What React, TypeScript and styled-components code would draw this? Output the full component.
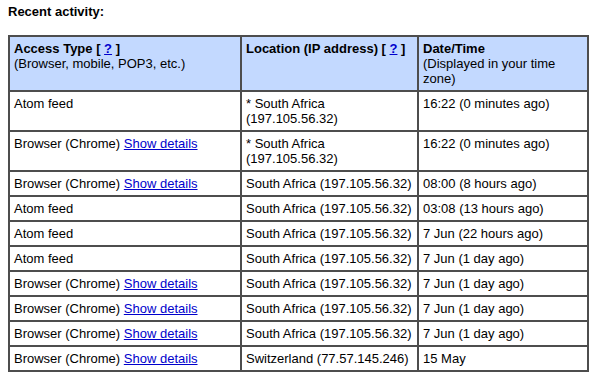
import styled, { createGlobalStyle } from 'styled-components';

interface Activity {
  access: string;
  details: boolean;
  location: string[];
  time: string;
}

const rows: Activity[] = [
  { access: 'Atom feed', details: false, location: ['* South Africa', '(197.105.56.32)'], time: '16:22 (0 minutes ago)' },
  { access: 'Browser (Chrome)', details: true, location: ['* South Africa', '(197.105.56.32)'], time: '16:22 (0 minutes ago)' },
  { access: 'Browser (Chrome)', details: true, location: ['South Africa (197.105.56.32)'], time: '08:00 (8 hours ago)' },
  { access: 'Atom feed', details: false, location: ['South Africa (197.105.56.32)'], time: '03:08 (13 hours ago)' },
  { access: 'Atom feed', details: false, location: ['South Africa (197.105.56.32)'], time: '7 Jun (22 hours ago)' },
  { access: 'Atom feed', details: false, location: ['South Africa (197.105.56.32)'], time: '7 Jun (1 day ago)' },
  { access: 'Browser (Chrome)', details: true, location: ['South Africa (197.105.56.32)'], time: '7 Jun (1 day ago)' },
  { access: 'Browser (Chrome)', details: true, location: ['South Africa (197.105.56.32)'], time: '7 Jun (1 day ago)' },
  { access: 'Browser (Chrome)', details: true, location: ['South Africa (197.105.56.32)'], time: '7 Jun (1 day ago)' },
  { access: 'Browser (Chrome)', details: true, location: ['Switzerland (77.57.145.246)'], time: '15 May' },
];

export default function App() {
  return (
    <>
      <GlobalStyle />
      <Page>
        <Heading>Recent activity:</Heading>
        <Table>
          <thead>
            <tr>
              <Th $width={222}>
                Access Type [ <Link href='#'>?</Link> ]
                <Sub>(Browser, mobile, POP3, etc.)</Sub>
              </Th>
              <Th $width={167}>
                Location (IP address) [ <Link href='#'>?</Link> ]
              </Th>
              <Th>
                Date/Time
                <Sub>(Displayed in your time zone)</Sub>
              </Th>
            </tr>
          </thead>
          <tbody>
            {rows.map((row, index) => (
              <tr key={index}>
                <Td>
                  {row.access}
                  {row.details ? (
                    <>
                      {' '}
                      <Link href='#'>Show details</Link>
                    </>
                  ) : null}
                </Td>
                <Td>
                  {row.location.map((line, i) => (
                    <div key={i}>{line}</div>
                  ))}
                </Td>
                <Td>{row.time}</Td>
              </tr>
            ))}
          </tbody>
        </Table>
      </Page>
    </>
  );
}

const GlobalStyle = createGlobalStyle`
  body {
    margin: 0;
    background: #fff;
    font-family: 'Liberation Sans', Arial, sans-serif;
    font-size: 13px;
    color: #000;
  }
`;

const Page = styled.div`
  padding: 4px 8px 8px;
`;

const Heading = styled.div`
  font-weight: bold;
  line-height: 15px;
  margin-bottom: 16px;
`;

const Table = styled.table`
  width: 581px;
  table-layout: fixed;
  border: 1px solid #4d4d4d;
  border-spacing: 0;
  font-size: 13px;
  line-height: 15px;
`;

const Th = styled.th<{ $width?: number }>`
  ${(p) => (p.$width ? `width: ${p.$width}px;` : '')}
  background-color: #c3d9ff;
  border: 1px solid #4d4d4d;
  padding: 4px;
  text-align: left;
  vertical-align: top;
  font-weight: bold;
`;

const Sub = styled.div`
  font-weight: normal;
`;

const Td = styled.td`
  border: 1px solid #4d4d4d;
  padding: 4px;
  vertical-align: top;
`;

const Link = styled.a`
  color: #0000cc;
  text-decoration: underline;
`;
